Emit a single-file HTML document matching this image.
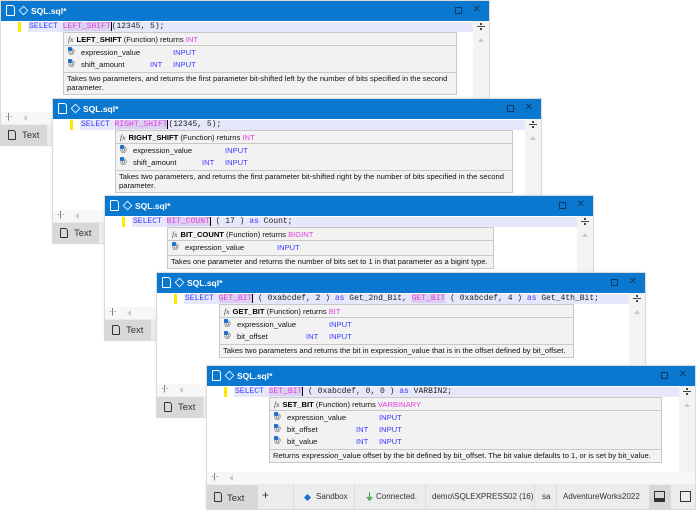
<!DOCTYPE html>
<html><head><meta charset="utf-8"><style>
*{margin:0;padding:0;box-sizing:border-box}
body{width:696px;height:510px;background:#fff;position:relative;overflow:hidden;font-family:"Liberation Sans",sans-serif;font-size:8px;color:#111}
.w{position:absolute;width:490px;height:146px;background:#fff;border:1px solid #dcdcdc;overflow:hidden;box-shadow:0 0 2px rgba(0,0,0,.08)}
.tb{position:absolute;left:0;top:0;right:0;height:20px;background:#0a78cf;color:#fff;font-weight:bold;font-size:8.5px}
.tb .t{position:absolute;left:30px;top:5px}
.tb .ic{position:absolute;left:5px;top:4px;width:9px;height:11px;border:1.5px solid #fff;border-radius:1px 3px 1px 1px}
.tb .dm{position:absolute;left:19px;top:6px;width:7px;height:7px;border:1.2px solid #cfe6ff;transform:rotate(45deg)}
.tb .mx{position:absolute;right:27px;top:6px;width:7px;height:7px;border:1px solid #0b3a66}
.tb .cl{position:absolute;right:8px;top:3px;color:#0b3a66;font-weight:normal;font-size:10px}
.ln{position:absolute;left:27px;right:16px;top:21px;height:10px;background:#e7e7fb}
.mk{position:absolute;left:17px;top:21px;width:3px;height:10px;background:#ffe800}
.code{position:absolute;left:28px;top:21px;height:10px;line-height:10px;font-family:"Liberation Mono",monospace;font-size:8px;color:#222;white-space:pre}
.k{color:#3a3aff}.f{color:#e040e0;background:#dcd0f0}
.cur{border-right:1.5px solid #000}
.vs{position:absolute;right:0;top:20px;width:16px;height:92px;background:#f3f3f3}
.vs .s{position:absolute;left:4px;top:5px;width:8px;height:1px;background:#444}
.vs .s:before{content:"";position:absolute;left:3px;top:-3px;width:2px;height:2px;background:#444}
.vs .s:after{content:"";position:absolute;left:3px;top:2px;width:2px;height:2px;background:#444}
.vs .u{position:absolute;left:5px;top:17px;width:0;height:0;border-left:3px solid transparent;border-right:3px solid transparent;border-bottom:4px solid #ccc}
.hs{position:absolute;left:0;right:0;top:111px;height:12px;background:#f7f7f7}
.hs .a{position:absolute;left:4px;top:0;font-size:8px;color:#444}
.hs .b{position:absolute;left:22px;top:3px;border-top:3px solid transparent;border-bottom:3px solid transparent;border-right:4px solid #ccc}
.bar{position:absolute;left:0;right:0;top:123px;height:23px;background:#ececec}
.tab{position:absolute;left:0;top:1px;width:46px;height:21px;background:#d8d8d8;font-size:9.5px;color:#333}
.tab span{position:absolute;left:21px;top:5px}
.tab i{position:absolute;left:7px;top:5px;width:8px;height:10px;border:1.3px solid #333;border-radius:1px 3px 1px 1px}
.tt{position:absolute;left:62px;top:31px;background:#f2f2f2;border:1px solid #c8c8c8;font-size:7.6px}
.hd{height:13px;line-height:13px;padding-left:4px;border-bottom:1px solid #c8c8c8;white-space:nowrap}
.hd em{font-family:"Liberation Serif",serif;font-style:italic;color:#444;margin-right:3px}
.hd b{color:#000}.p{color:#e040e0}
.ps{border-bottom:1px solid #c8c8c8;padding:1px 0}
.pr{position:relative;height:12px;line-height:12px;white-space:nowrap}
.pr .i{position:absolute;left:4px;top:0;color:#555;font-size:7px}
.pr .i:before{content:"";position:absolute;left:0;top:0;width:4px;height:4px;background:#1a6fd0;border-radius:1px}
.pr .n{position:absolute;left:17px}
.pr .ty{position:absolute;left:86px;color:#3a3aff}
.pr .io{position:absolute;left:109px;color:#3a3aff}
.ds{padding:1px 4px 2px 3px;line-height:9px}
.sb span{position:absolute;top:8px;white-space:nowrap}
.sp{width:1px;height:27px;background:#ddd;top:0 !important}
</style></head><body>

<div class="w" style="left:0;top:0">
<div class="tb"><div class="ic"></div><div class="dm"></div><div class="t">SQL.sql*</div><div class="mx"></div><div class="cl">✕</div></div>
<div class="ln"></div><div class="mk"></div>
<div class="code"><span class="k">SELECT</span> <span class="f cur">LEFT_SHIFT</span>(12345, 5);</div>
<div class="vs"><div class="s"></div><div class="u"></div></div>
<div class="tt" style="width:394px"><div class="hd"><em>fx</em><b>LEFT_SHIFT</b> (Function) returns <span class="p">INT</span></div>
<div class="ps"><div class="pr"><span class="i">@</span><span class="n">expression_value</span><span class="io">INPUT</span></div>
<div class="pr"><span class="i">@</span><span class="n">shift_amount</span><span class="ty">INT</span><span class="io">INPUT</span></div></div>
<div class="ds">Takes two parameters, and returns the first parameter bit-shifted left by the number of bits specified in the second parameter.</div></div>
<div class="hs"><span class="a">·|·</span><span class="b"></span></div>
<div class="bar"><div class="tab"><i></i><span>Text</span></div></div>
</div>

<div class="w" style="left:52px;top:98px">
<div class="tb"><div class="ic"></div><div class="dm"></div><div class="t">SQL.sql*</div><div class="mx"></div><div class="cl">✕</div></div>
<div class="ln"></div><div class="mk"></div>
<div class="code"><span class="k">SELECT</span> <span class="f cur">RIGHT_SHIFT</span>(12345, 5);</div>
<div class="vs"><div class="s"></div><div class="u"></div></div>
<div class="tt" style="width:398px"><div class="hd"><em>fx</em><b>RIGHT_SHIFT</b> (Function) returns <span class="p">INT</span></div>
<div class="ps"><div class="pr"><span class="i">@</span><span class="n">expression_value</span><span class="io">INPUT</span></div>
<div class="pr"><span class="i">@</span><span class="n">shift_amount</span><span class="ty">INT</span><span class="io">INPUT</span></div></div>
<div class="ds">Takes two parameters, and returns the first parameter bit-shifted right by the number of bits specified in the second parameter.</div></div>
<div class="hs"><span class="a">·|·</span><span class="b"></span></div>
<div class="bar"><div class="tab"><i></i><span>Text</span></div></div>
</div>

<div class="w" style="left:104px;top:195px">
<div class="tb"><div class="ic"></div><div class="dm"></div><div class="t">SQL.sql*</div><div class="mx"></div><div class="cl">✕</div></div>
<div class="ln"></div><div class="mk"></div>
<div class="code"><span class="k">SELECT</span> <span class="f cur">BIT_COUNT</span> ( 17 ) <span class="k">as</span> Count;</div>
<div class="vs"><div class="s"></div><div class="u"></div></div>
<div class="tt" style="width:327px"><div class="hd"><em>fx</em><b>BIT_COUNT</b> (Function) returns <span class="p">BIGINT</span></div>
<div class="ps"><div class="pr"><span class="i">@</span><span class="n">expression_value</span><span class="io">INPUT</span></div></div>
<div class="ds">Takes one parameter and returns the number of bits set to 1 in that parameter as a bigint type.</div></div>
<div class="hs"><span class="a">·|·</span><span class="b"></span></div>
<div class="bar"><div class="tab"><i></i><span>Text</span></div></div>
</div>

<div class="w" style="left:156px;top:272px">
<div class="tb"><div class="ic"></div><div class="dm"></div><div class="t">SQL.sql*</div><div class="mx"></div><div class="cl">✕</div></div>
<div class="ln"></div><div class="mk"></div>
<div class="code"><span class="k">SELECT</span> <span class="f cur">GET_BIT</span> ( 0xabcdef, 2 ) <span class="k">as</span> Get_2nd_Bit, <span class="f">GET_BIT</span> ( 0xabcdef, 4 ) <span class="k">as</span> Get_4th_Bit;</div>
<div class="vs"><div class="s"></div><div class="u"></div></div>
<div class="tt" style="width:355px"><div class="hd"><em>fx</em><b>GET_BIT</b> (Function) returns <span class="p">BIT</span></div>
<div class="ps"><div class="pr"><span class="i">@</span><span class="n">expression_value</span><span class="io">INPUT</span></div>
<div class="pr"><span class="i">@</span><span class="n">bit_offset</span><span class="ty">INT</span><span class="io">INPUT</span></div></div>
<div class="ds">Takes two parameters and returns the bit in expression_value that is in the offset defined by bit_offset.</div></div>
<div class="hs"><span class="a">·|·</span><span class="b"></span></div>
<div class="bar"><div class="tab"><i></i><span>Text</span></div></div>
</div>

<div class="w" style="left:206px;top:365px;height:145px">
<div class="tb"><div class="ic"></div><div class="dm"></div><div class="t">SQL.sql*</div><div class="mx"></div><div class="cl">✕</div></div>
<div class="ln"></div><div class="mk"></div>
<div class="code"><span class="k">SELECT</span> <span class="f cur">SET_BIT</span> ( 0xabcdef, 0, 0 ) <span class="k">as</span> VARBIN2;</div>
<div class="vs"><div class="s"></div><div class="u"></div></div>
<div class="tt" style="width:393px"><div class="hd"><em>fx</em><b>SET_BIT</b> (Function) returns <span class="p">VARBINARY</span></div>
<div class="ps"><div class="pr"><span class="i">@</span><span class="n">expression_value</span><span class="io">INPUT</span></div>
<div class="pr"><span class="i">@</span><span class="n">bit_offset</span><span class="ty">INT</span><span class="io">INPUT</span></div>
<div class="pr"><span class="i">@</span><span class="n">bit_value</span><span class="ty">INT</span><span class="io">INPUT</span></div></div>
<div class="ds">Returns expression_value offset by the bit defined by bit_offset. The bit value defaults to 1, or is set by bit_value.</div></div>
<div class="hs" style="top:106px"><span class="a">·|·</span><span class="b"></span></div>
<div class="bar sb" style="top:118px;height:27px;font-size:8px;color:#333">
<div class="tab" style="width:51px;height:25px"><i style="top:7px"></i><span style="top:8px;left:20px">Text</span></div>
<span style="left:55px;top:4px;font-size:12px">+</span>
<span class="sp" style="left:86px"></span>
<span style="left:98px;top:11px;width:5px;height:5px;background:#1a6fd0;transform:rotate(45deg)"></span>
<span style="left:109px">Sandbox</span>
<span class="sp" style="left:147px"></span>
<span style="left:158px;top:6px;color:#2a9a2a;font-weight:bold;font-size:9px">⏚</span>
<span style="left:169px">Connected.</span>
<span class="sp" style="left:218px"></span>
<span style="left:225px">demo\SQLEXPRESS02 (16)</span>
<span class="sp" style="left:327px"></span>
<span style="left:335px">sa</span>
<span class="sp" style="left:349px"></span>
<span style="left:356px">AdventureWorks2022</span>
<span style="left:442px;top:1px;width:22px;height:25px;background:#d8d8d8"></span>
<span style="left:447px;top:7px;width:11px;height:11px;border:1px solid #333;border-bottom:4px solid #333"></span>
<span style="left:473px;top:7px;width:11px;height:11px;border:1px solid #333"></span>
</div>
</div>
</body></html>
